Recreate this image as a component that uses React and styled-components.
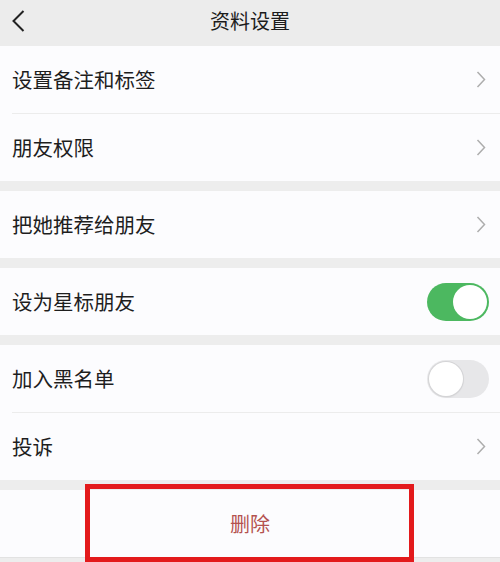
import React from "react";
import styled, { createGlobalStyle } from "styled-components";

const Global = createGlobalStyle`
  html, body { margin: 0; padding: 0; background: #ededed; }
  body { font-family: "Noto Sans CJK SC", "Noto Sans", sans-serif; -webkit-font-smoothing: antialiased; }
  * { box-sizing: border-box; }
`;

const Page = styled.div`
  width: 500px;
  height: 562px;
  overflow: hidden;
  background: #ededed;
  display: flex;
  flex-direction: column;
`;

const Header = styled.div`
  height: 46px;
  flex: none;
  display: grid;
  grid-template-columns: 60px 1fr 60px;
  align-items: center;
  padding-bottom: 4px;
  background: #ececec;
`;

const Back = styled.div`
  padding-left: 12px;
  display: flex;
  align-items: center;
`;

const Title = styled.div`
  text-align: center;
  font-size: 20px;
  color: #1c1c1c;
  line-height: 1;
`;

const Group = styled.div`
  background: #fcfcfe;
  margin-top: ${(p) => p.$gap ?? 10}px;
  flex: none;
`;

const Row = styled.div`
  height: 67px;
  display: flex;
  align-items: center;
  justify-content: space-between;
  padding: 0 ${(p) => (p.$toggle ? 11 : 14)}px 0 12px;
  font-size: 20.5px;
  color: #1e1e1e;
  line-height: 1;
`;

const Divider = styled.div`
  height: 1px;
  margin-left: 12px;
  background: #ececec;
`;

const Track = styled.div`
  width: 62px;
  height: 38px;
  border-radius: 19px;
  background: ${(p) => (p.$on ? "#4cb860" : "#e7e7e9")};
  display: flex;
  align-items: center;
  justify-content: ${(p) => (p.$on ? "flex-end" : "flex-start")};
  padding: 2px;
`;

const Knob = styled.div`
  width: 34px;
  height: 34px;
  border-radius: 50%;
  background: #ffffff;
  box-shadow: ${(p) => (p.$on ? "none" : "0 0 0 1px #d4d4d6, 0 1px 2px rgba(0,0,0,0.12)")};
`;

const DeleteSection = styled.div`
  position: relative;
  margin-top: 10px;
  height: 68px;
  flex: none;
  background: #fcfcfe;
  border-bottom: 1px solid #e2e2e2;
  display: flex;
  align-items: center;
  justify-content: center;
  font-size: 20px;
  color: #b4524f;
  line-height: 1;
`;

const Highlight = styled.div`
  position: absolute;
  left: 85px;
  top: -6px;
  width: 329px;
  height: 78px;
  border: 5px solid #e31a1c;
  pointer-events: none;
`;

const Chevron = () => (
  <svg width="10" height="17" viewBox="0 0 10 17">
    <polyline points="1.5,1 8.5,8.5 1.5,16" fill="none" stroke="#adadad" strokeWidth="1.5" />
  </svg>
);

const Toggle = ({ on }) => (
  <Track $on={on}>
    <Knob $on={on} />
  </Track>
);

export default function App() {
  return (
    <>
      <Global />
      <Page>
        <Header>
          <Back>
            <svg width="13" height="22" viewBox="0 0 13 22">
              <polyline points="11.5,1 1.5,11 11.5,21" fill="none" stroke="#222" strokeWidth="2" />
            </svg>
          </Back>
          <Title>资料设置</Title>
          <div />
        </Header>
        <Group $gap={0}>
          <Row>
            设置备注和标签
            <Chevron />
          </Row>
          <Divider />
          <Row>
            朋友权限
            <Chevron />
          </Row>
        </Group>
        <Group>
          <Row>
            把她推荐给朋友
            <Chevron />
          </Row>
        </Group>
        <Group>
          <Row $toggle>
            设为星标朋友
            <Toggle on />
          </Row>
        </Group>
        <Group>
          <Row $toggle>
            加入黑名单
            <Toggle />
          </Row>
          <Divider />
          <Row>
            投诉
            <Chevron />
          </Row>
        </Group>
        <DeleteSection>
          删除
          <Highlight />
        </DeleteSection>
      </Page>
    </>
  );
}
